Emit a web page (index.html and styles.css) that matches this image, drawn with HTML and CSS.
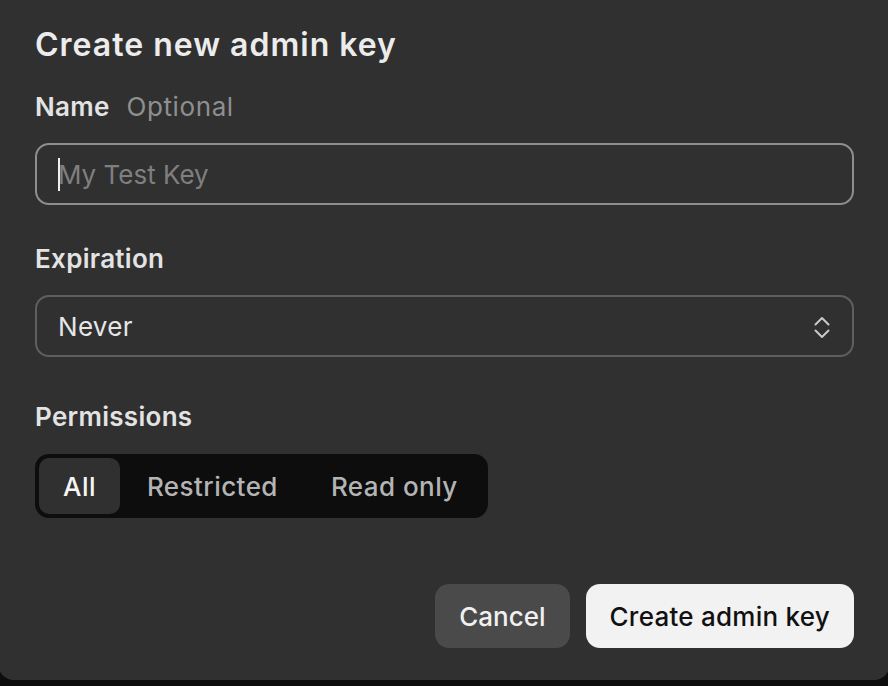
FILE: index.html
```html
<!DOCTYPE html>
<html lang="en">
<head>
<meta charset="utf-8">
<title>Create new admin key</title>
<link rel="stylesheet" href="styles.css">
</head>
<body>
<div class="dialog">
  <h1 class="title">Create new admin key</h1>

  <div class="label label-name">Name <span class="optional">Optional</span></div>
  <div class="input-wrap">
    <input class="input" type="text" placeholder="My Test Key">
    <span class="caret"></span>
  </div>

  <div class="label label-exp">Expiration</div>
  <div class="select">
    <span class="select-value">Never</span>
    <svg class="chevrons" width="16" height="24" viewBox="0 0 16 24" fill="none" stroke="#c9c9c9" stroke-width="2" stroke-linecap="round" stroke-linejoin="round">
      <path d="M1.5 9.5 L8 3 L14.5 9.5"/>
      <path d="M1.5 15.5 L8 22 L14.5 15.5"/>
    </svg>
  </div>

  <div class="label label-perm">Permissions</div>
  <div class="segment">
    <span class="seg-item active">All</span>
    <span class="seg-item">Restricted</span>
    <span class="seg-item">Read only</span>
  </div>

  <div class="actions">
    <button class="btn btn-cancel">Cancel</button>
    <button class="btn btn-primary">Create admin key</button>
  </div>
</div>
</body>
</html>
```

FILE: styles.css
```css
html, body {
  margin: 0;
  padding: 0;
}
body {
  background: #0d0d0d;
  width: 888px;
  height: 686px;
  overflow: hidden;
  font-family: Inter, "Noto Sans", "Liberation Sans", sans-serif;
}
.dialog {
  box-sizing: border-box;
  width: 892px;
  margin-left: -2px;
  height: 680px;
  background: #303030;
  border-radius: 0 0 16px 16px;
  padding: 0 36px 0 37px;
  display: flex;
  flex-direction: column;
}
.title {
  margin: 25px 0 0;
  font-size: 32px;
  line-height: 40px;
  font-weight: 600;
  color: #ececec;
  letter-spacing: 1px;
}
.label {
  font-size: 26px;
  line-height: 32px;
  font-weight: 600;
  color: #e3e3e3;
  letter-spacing: 0.3px;
}
.label-name { margin-top: 26px; }
.label-exp { margin-top: 38px; }
.label-perm { margin-top: 44px; }
.optional {
  font-weight: 400;
  color: #8f8f8f;
  margin-left: 10px;
  letter-spacing: 0.6px;
}
.input-wrap {
  position: relative;
  margin-top: 20px;
}
.input {
  box-sizing: border-box;
  width: 100%;
  height: 62px;
  border: 2px solid #8e8e8e;
  border-radius: 14px;
  background: transparent;
  padding: 0 21px;
  font-family: inherit;
  font-size: 26px;
  color: #e3e3e3;
  outline: none;
  display: block;
}
.input::placeholder {
  color: #7f7f7f;
}
.caret {
  position: absolute;
  left: 23px;
  top: 15px;
  width: 2px;
  height: 33px;
  background: #f0f0f0;
}
.select {
  box-sizing: border-box;
  margin-top: 20px;
  height: 62px;
  border: 2px solid #5f5f5f;
  border-radius: 14px;
  padding: 0 22px 0 21px;
  display: flex;
  align-items: center;
  justify-content: space-between;
}
.select-value {
  font-size: 26px;
  color: #e6e6e6;
  letter-spacing: 0.3px;
}
.chevrons {
  display: block;
  margin-top: 1px;
}
.segment {
  margin-top: 21px;
  align-self: flex-start;
  display: flex;
  background: #0d0d0d;
  border-radius: 14px;
  padding: 4px;
  height: 64px;
  box-sizing: border-box;
}
.seg-item {
  display: flex;
  align-items: center;
  padding: 0 26px 0 27px;
  font-size: 26px;
  font-weight: 500;
  color: #b4b4b4;
  border-radius: 10px;
  letter-spacing: 0.45px;
}
.seg-item.active {
  background: #303030;
  color: #f5f5f5;
  padding: 0 24px;
}
.actions {
  margin-top: auto;
  margin-bottom: 32px;
  display: flex;
  justify-content: flex-end;
  gap: 16px;
}
.btn {
  height: 64px;
  border: none;
  border-radius: 14px;
  padding: 0 24px;
  font-family: inherit;
  font-size: 26px;
  font-weight: 500;
  letter-spacing: 0.25px;
}
.btn-cancel {
  background: #4a4a4a;
  color: #f0f0f0;
  letter-spacing: 0;
}
.btn-primary {
  background: #f2f2f2;
  color: #111111;
}
```
